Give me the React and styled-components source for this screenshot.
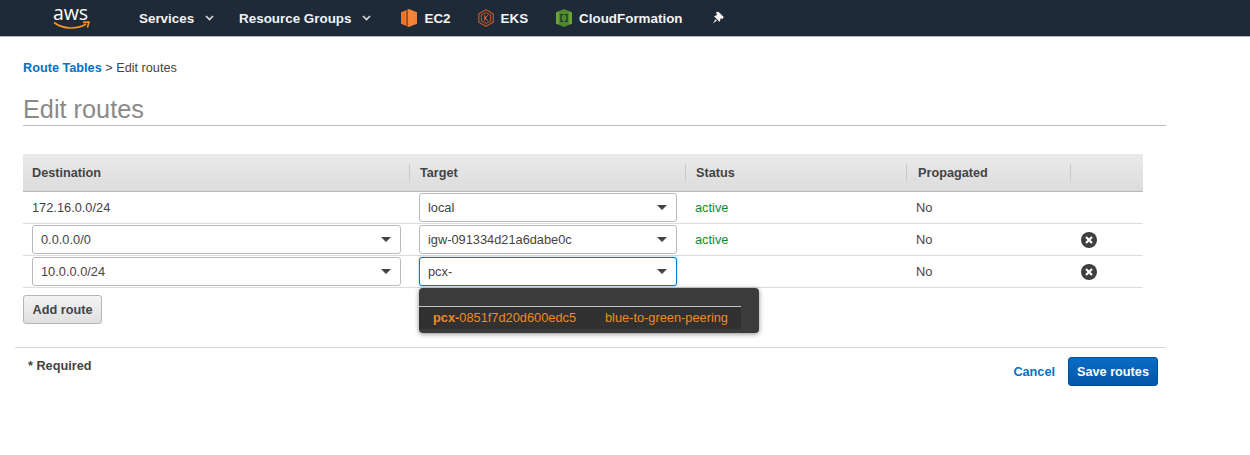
import React from "react";
import styled, { createGlobalStyle } from "styled-components";

const Global = createGlobalStyle`
  html, body { margin: 0; padding: 0; background: #fff; }
  body { font-family: "Liberation Sans", Arial, sans-serif; color: #444; }
  * { box-sizing: border-box; }
`;

const Page = styled.div`
  width: 1250px;
  height: 455px;
  overflow: hidden;
  background: #fff;
`;

const Nav = styled.nav`
  height: 37px;
  background: #1f2a38;
  border-bottom: 1px solid #b5b8bb;
  display: flex;
  align-items: center;
  padding-left: 53px;
`;

const Logo = styled.div`
  width: 37px;
  height: 30px;
  margin-right: 49px;
  display: flex;
  flex-direction: column;
  align-items: center;
  color: #fff;
`;
const LogoWord = styled.span`
  font-family: "Open Sans", sans-serif;
  font-size: 19.5px;
  line-height: 16px;
  margin: 2px 2px 0 0;
`;
const Smile = styled.svg`
  width: 37px;
  height: 10px;
  margin-top: 0;
`;

const NavMenu = styled.span`
  display: flex;
  align-items: center;
  gap: ${(p) => p.$gap}px;
  margin-right: ${(p) => p.$mr}px;
  color: #f2f3f3;
  font-size: 13.4px;
  font-weight: 700;
`;

const Shortcut = styled.span`
  display: flex;
  align-items: center;
  gap: 7px;
  margin-right: ${(p) => p.$mr}px;
  color: #f2f3f3;
  font-size: 13.4px;
  font-weight: 700;
`;

const Main = styled.main`
  padding: 0 0 0 23px;
`;

const Crumbs = styled.div`
  margin-top: 24px;
  height: 15px;
  line-height: 15px;
  font-size: 12.7px;
  color: #444;
`;
const CrumbLink = styled.a`
  color: #0073c8;
  font-weight: 700;
`;

const Title = styled.h1`
  width: 1143px;
  height: 31px;
  margin: 19px 0 0;
  font-size: 25.3px;
  line-height: 29px;
  font-weight: 400;
  color: #8a8a8a;
  border-bottom: 1px solid #bdbdbd;
`;

const Table = styled.div`
  width: 1120px;
  margin-top: 28px;
  position: relative;
`;

const cols = "387px 276px 221px 164px 72px";

const Head = styled.div`
  display: grid;
  grid-template-columns: ${cols};
  height: 38px;
  background: linear-gradient(#eaeaea, #dcdcdc);
  border-bottom: 1px solid #b8b8b8;
  align-items: center;
  font-size: 12.7px;
  font-weight: 700;
  color: #444;
`;

const HeadCell = styled.div`
  height: 17px;
  line-height: 19px;
  padding-left: ${(p) => p.$pl}px;
  border-right: ${(p) => (p.$noSep ? "none" : "1px solid #c8c8c8")};
`;

const Row = styled.div`
  display: grid;
  grid-template-columns: ${cols};
  height: 32px;
  border-bottom: 1px solid #dcdcdc;
  align-items: center;
  font-size: 12.8px;
  color: #444;
`;

const Cell = styled.div`
  padding-left: ${(p) => p.$pl}px;
  padding-right: ${(p) => p.$pr || 0}px;
`;

const Status = styled.span`
  color: #118a2c;
`;

const Select = styled.div`
  height: 29px;
  display: flex;
  align-items: center;
  justify-content: space-between;
  padding: 0 9px 0 8px;
  background: #fff;
  border: 1px solid ${(p) => (p.$focus ? "#0a78d2" : "#b9b9b9")};
  border-radius: 3px;
  box-shadow: ${(p) => (p.$focus ? "0 0 2px rgba(10,120,210,.6)" : "none")};
`;

const Caret = styled.i`
  display: block;
  width: 0;
  height: 0;
  border-left: 5px solid transparent;
  border-right: 5px solid transparent;
  border-top: 5px solid #444;
`;

const Remove = styled.svg`
  display: block;
  width: 16px;
  height: 16px;
  margin-left: 10px;
  margin-top: 1px;
`;

const Menu = styled.div`
  position: absolute;
  left: 396px;
  top: 134px;
  width: 340px;
  height: 45px;
  background: #3b3b3b;
  border-radius: 4px;
  box-shadow: 0 1px 5px rgba(0, 0, 0, 0.45);
  padding-top: 18px;
`;

const MenuOption = styled.div`
  width: 322px;
  height: 23px;
  background: #313131;
  border-top: 1px solid #c4c4c4;
  display: flex;
  justify-content: space-between;
  align-items: center;
  padding: 0 13px 2px 14px;
  font-size: 12.8px;
  color: #f08a1d;
`;

const AddBtn = styled.button`
  display: block;
  width: 79px;
  height: 29px;
  margin-top: 7px;
  padding: 0;
  border: 1px solid #b5b5b5;
  border-radius: 3px;
  background: linear-gradient(#f4f4f4, #dfdfdf);
  font-family: inherit;
  font-size: 12.7px;
  font-weight: 700;
  color: #444;
`;

const Footer = styled.footer`
  width: 1151px;
  height: 40px;
  margin: 23px 0 0 -8px;
  border-top: 1px solid #d8d8d8;
  display: flex;
  justify-content: space-between;
  align-items: flex-start;
`;

const Required = styled.div`
  margin: 11px 0 0 13px;
  font-size: 12.7px;
  line-height: 15px;
  font-weight: 700;
  color: #444;
`;

const Actions = styled.div`
  display: flex;
  align-items: center;
  gap: 13px;
  margin: 9px 8px 0 0;
`;

const Cancel = styled.a`
  color: #0073c8;
  font-size: 12.7px;
  font-weight: 700;
`;

const Save = styled.button`
  width: 90px;
  height: 29px;
  padding: 0;
  border: 1px solid #03509e;
  border-radius: 3px;
  background: linear-gradient(#0a6cc4, #0356a8);
  color: #fff;
  font-family: inherit;
  font-size: 12.7px;
  font-weight: 700;
`;

const Chevron = () => (
  <svg width="9" height="6" viewBox="0 0 9 6">
    <path d="M1 1 L4.5 4.6 L8 1" fill="none" stroke="#d5d7d9" strokeWidth="1.7" />
  </svg>
);

const Ec2Icon = () => (
  <svg width="16" height="18" viewBox="0 0 16 18">
    <path d="M0 3.4 L8 0 L16 3.4 V14.6 L8 18 L0 14.6Z" fill="#f58536" />
    <path d="M0 3.4 L4 1.7 V16.3 L0 14.6Z" fill="#e9742b" />
    <path d="M5 1.3 H7 V16.7 H5Z" fill="#a94c1c" />
    <path d="M12 1.7 L16 3.4 V14.6 L12 16.3Z" fill="#f0803a" />
  </svg>
);

const EksIcon = () => (
  <svg width="16" height="18" viewBox="0 0 16 18" fill="none" stroke="#b9532a">
    <path d="M8 .8 L15.2 4.9 V13.1 L8 17.2 L.8 13.1 V4.9Z" strokeWidth="1.3" />
    <path d="M8 3.6 L12.6 6.3 V11.7 L8 14.4 L3.4 11.7 V6.3Z" strokeWidth="1.1" />
    <path d="M6.8 6.4 V11.6 M9.8 6.4 L7 9 L9.8 11.6" strokeWidth="1" stroke="#e07a3c" />
  </svg>
);

const CfIcon = () => (
  <svg width="16" height="18" viewBox="0 0 16 18">
    <path d="M8 0 L16 3.6 V14.4 L8 18 L0 14.4 V3.6Z" fill="#4f8a2b" />
    <path d="M0 3.6 L3 2.3 V15.7 L0 14.4Z M13 2.3 L16 3.6 V14.4 L13 15.7Z" fill="#6aa53a" />
    <path d="M4.4 5 H7.2 V6.2 H5.6 V11.8 H7.2 V13 H4.4Z M8.8 5 H11.6 V13 H8.8 V11.8 H10.4 V6.2 H8.8Z" fill="#1f2a38" />
  </svg>
);

const PinIcon = () => (
  <svg width="12" height="14" viewBox="0 0 12 14">
    <path d="M4 1.2 L6.4 .8 L11.6 5.8 L11 7.8 L8.6 7.4 L7.8 11 L2 5.2 L5 4Z" fill="#f5f5f5" />
    <path d="M3.6 8.2 L.8 12.4 L5 9.6Z" fill="#f5f5f5" />
  </svg>
);

const RemoveIcon = () => (
  <Remove viewBox="0 0 16 16">
    <circle cx="8" cy="8" r="8" fill="#3f3f3f" />
    <path d="M5 5 L11 11 M11 5 L5 11" stroke="#fff" strokeWidth="2.2" />
  </Remove>
);

const SelectBox = ({ value, focus }) => (
  <Select $focus={focus}>
    <span>{value}</span>
    <Caret />
  </Select>
);

export default function App() {
  return (
    <Page>
      <Global />
      <Nav>
        <Logo>
          <LogoWord>aws</LogoWord>
          <Smile viewBox="0 0 37 10">
            <path d="M1 1.5 C10 8.5 25 8.5 33 3" fill="none" stroke="#f29423" strokeWidth="1.6" />
            <path d="M30 1.4 L36 1 L34.4 6.4" fill="none" stroke="#f29423" strokeWidth="1.6" />
          </Smile>
        </Logo>
        <NavMenu $gap={11} $mr={25}>Services <Chevron /></NavMenu>
        <NavMenu $gap={11} $mr={30}>Resource Groups <Chevron /></NavMenu>
        <Shortcut $mr={27}><Ec2Icon />EC2</Shortcut>
        <Shortcut $mr={28}><EksIcon />EKS</Shortcut>
        <Shortcut $mr={29}><CfIcon />CloudFormation</Shortcut>
        <PinIcon />
      </Nav>
      <Main>
        <Crumbs><CrumbLink>Route Tables</CrumbLink> &gt; Edit routes</Crumbs>
        <Title>Edit routes</Title>
        <Table>
          <Head>
            <HeadCell $pl={9}>Destination</HeadCell>
            <HeadCell $pl={10}>Target</HeadCell>
            <HeadCell $pl={10}>Status</HeadCell>
            <HeadCell $pl={11}>Propagated</HeadCell>
            <HeadCell $noSep />
          </Head>
          <Row>
            <Cell $pl={9}>172.16.0.0/24</Cell>
            <Cell $pl={9} $pr={9}><SelectBox value="local" /></Cell>
            <Cell $pl={9}><Status>active</Status></Cell>
            <Cell $pl={9}>No</Cell>
            <Cell />
          </Row>
          <Row>
            <Cell $pl={9} $pr={9}><SelectBox value="0.0.0.0/0" /></Cell>
            <Cell $pl={9} $pr={9}><SelectBox value="igw-091334d21a6dabe0c" /></Cell>
            <Cell $pl={9}><Status>active</Status></Cell>
            <Cell $pl={9}>No</Cell>
            <Cell><RemoveIcon /></Cell>
          </Row>
          <Row>
            <Cell $pl={9} $pr={9}><SelectBox value="10.0.0.0/24" /></Cell>
            <Cell $pl={9} $pr={9}><SelectBox value="pcx-" focus /></Cell>
            <Cell />
            <Cell $pl={9}>No</Cell>
            <Cell><RemoveIcon /></Cell>
          </Row>
          <Menu>
            <MenuOption>
              <span><b>pcx-</b>0851f7d20d600edc5</span>
              <span>blue-to-green-peering</span>
            </MenuOption>
          </Menu>
          <AddBtn>Add route</AddBtn>
        </Table>
        <Footer>
          <Required>* Required</Required>
          <Actions>
            <Cancel>Cancel</Cancel>
            <Save>Save routes</Save>
          </Actions>
        </Footer>
      </Main>
    </Page>
  );
}
